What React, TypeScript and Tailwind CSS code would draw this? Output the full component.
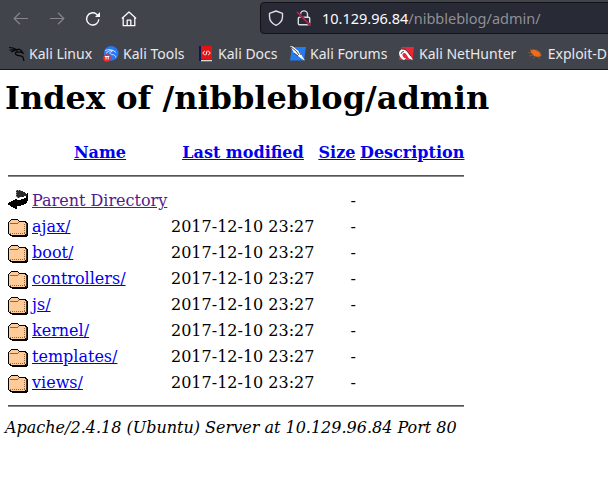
import React from "react";

const folders = ["ajax/", "boot/", "controllers/", "js/", "kernel/", "templates/", "views/"];

function FolderIcon() {
  return (
    <svg width="20" height="22" viewBox="0 0 20 22" shapeRendering="crispEdges">
      <path d="M2 5h1V4h7v1h1v1h7v1h1v1h1v13h-1v1H4v-1H2v-1H1v-1H0V7h1V6h1z" fill="#000" />
      <path d="M1 7h1V6h1V5h7v1h1v1h6v1h1v11h-1v1H3v-1H1z" fill="#ffcc99" />
      <path d="M2 8.5h8M10 7.5h1" stroke="#996633" />
      <path d="M2 18.5h15M16.5 9v10" stroke="#996633" strokeDasharray="1 1" />
      <path d="M18 8h1v12h-1z" fill="#333" />
    </svg>
  );
}

function BackIcon() {
  return (
    <svg width="20" height="22" viewBox="0 0 20 22" shapeRendering="crispEdges">
      <path d="M8 1h4v1h3v1h2v1h1v1h1v2h-3v1h-4v1H9V8H8z" fill="#2b2b2b" />
      <path d="M8 1.5h5M8.5 1v7M9 8.5h3" stroke="#999" strokeDasharray="1 1" />
      <path d="M19 4h1v8h-1v2h-1v1h-2v1h-3v1H9v3H7v-1H5v-1H3v-1H2v-1H0v-2h1v-1h2v-1h2v-1h2v-1h2v1h4v-1h3V9h2V7h1z" fill="#000" />
    </svg>
  );
}

function Dragon() {
  return (
    <svg width="16" height="16" viewBox="0 0 16 16" fill="none" stroke="#050607">
      <path d="M0 1.5l4 .5 4 1.7M.5 4l4-.3 4 .5M2 6l4-1.5" strokeWidth="1.1" />
      <path d="M7 4l3-.8 2.3 1.2L14 7l-2.5-.8L8 6c-1.8.2-2.2 2-.6 2.9 2 1 4.8.3 6.3 2 .8 1 .8 2.5 1.3 4.1" strokeWidth="1.3" />
    </svg>
  );
}

function ToolsIcon() {
  return (
    <svg width="16" height="16" viewBox="0 0 16 16">
      <circle cx="8.2" cy="7.4" r="7.3" fill="#2878f5" />
      <path d="M2 4.5l4-1 4 .8 3 2.2M3 7l4-2.5 3 .3M9 5.5c-3 .3-2.5 2.500 0 3 2.500.3 3.400 1 4 3" fill="none" stroke="#d9eaff" strokeWidth=".9" />
      <circle cx="4" cy="12" r="3.8" fill="#ef2929" />
      <path d="M1.800 10.500h4.500M3 10.500v3M5.200 10.500v3" stroke="#fff" strokeWidth="1" />
    </svg>
  );
}

function DocsIcon() {
  return (
    <svg width="16" height="16" viewBox="0 0 16 16">
      <path d="M1 0H4v15H1z" fill="#061b54" />
      <path d="M3 0h11v13.500H3z" fill="#df1515" />
      <path d="M3 14h11v1.300H3z" fill="#d8d8d8" />
      <path d="M6.800 5L4.700 7l2.100 2M10.200 5l2.100 2-2.100 2M9.200 4.800L7.800 9.200" fill="none" stroke="#fff" />
    </svg>
  );
}

function ForumsIcon() {
  return (
    <svg width="16" height="16" viewBox="0 0 16 16">
      <path d="M2 1H16l-2 13.500H0z" fill="#237cf1" />
      <path d="M0 0l3 .5 4 3.500 3 2 2 4 3 4.500-3-1.500-4-3-4-3-2-4z" fill="#fff" />
      <path d="M1 1l5 4 3 4M9 5l2 4M4 7l4 3" fill="none" stroke="#25272c" strokeWidth=".8" />
    </svg>
  );
}

function HunterIcon() {
  return (
    <svg width="16" height="16" viewBox="0 0 16 16">
      <path d="M2.500 1H15l-1.500 13H0z" fill="#ec2638" />
      <path d="M0 7c.5-3 3-4.500 5.500-3.500C8 4.500 9 6.500 11 9l3 5-4-1.500-3-4.500C6 6.500 4 7 3.500 8.500 3 10 5 12 7 12.500L5 14C2 13 0 10 0 7z" fill="#fff" />
      <path d="M3 3l3 .3 3 3 3 4M2 8l1-2 2-.5" fill="none" stroke="#222" strokeWidth=".8" />
    </svg>
  );
}

function ExploitIcon() {
  return (
    <svg width="16" height="16" viewBox="0 0 16 16">
      <path d="M2.500 4l3-.5 4 1 3 2.500.8 3-3 1-4-1-3-3z" fill="#f36b16" />
      <path d="M0 6.500l4 .5M1 10l5-1M5 12.500l3-2.500M8 3l1 3M11 6h2M11 9h3M10 10l2 3M2 3l3 2" stroke="#a85b35" strokeWidth=".7" />
    </svg>
  );
}

const bookmarks = [
  { label: "Kali Linux", Icon: Dragon, width: "w-[94px]" },
  { label: "Kali Tools", Icon: ToolsIcon, width: "w-[95px]" },
  { label: "Kali Docs", Icon: DocsIcon, width: "w-[92px]" },
  { label: "Kali Forums", Icon: ForumsIcon, width: "w-[109px]" },
  { label: "Kali NetHunter", Icon: HunterIcon, width: "w-[129px]" },
  { label: "Exploit-D", Icon: ExploitIcon, width: "w-[79px]" },
];

function BrowserBar() {
  return (
    <header className="h-[70px] overflow-hidden border-b border-[#15161b] bg-[#42444c] font-['Noto_Sans',sans-serif] text-[#e8e8ec]">
      <div className="flex h-[38px]">
        <div className="flex w-[260px] shrink-0 items-start gap-5 pt-[11px] pl-[13px]">
          <svg width="16" height="16" viewBox="0 0 16 16" fill="none" stroke="#85868b" strokeWidth="1.2"><path d="M15 7.5H1M7 1.800L1.200 7.500 7 13.200" /></svg>
          <svg width="16" height="16" viewBox="0 0 16 16" fill="none" stroke="#85868b" strokeWidth="1.2"><path d="M1 7.5h14M9 1.800l5.800 5.700L9 13.200" /></svg>
          <svg width="16" height="16" viewBox="0 0 16 16" fill="none" stroke="#fbfbfe" strokeWidth="1.4"><path d="M13.8 8.3A6.100 6.100 0 1 1 11.300 3L13 4.700" /><path d="M15 1v5h-5z" fill="#fbfbfe" stroke="none" /></svg>
          <svg width="16" height="16" viewBox="0 0 16 16" fill="none" stroke="#fbfbfe" strokeWidth="1.3" strokeLinejoin="round"><path d="M.9 7.5L8 1l7.100 6.500M2.200 6.500v8.200h11.600V6.500M6.200 14.500V9.200h3.600v5.300" /></svg>
        </div>
        <div className="mt-[2px] flex h-8 w-[360px] shrink-0 items-center rounded-[4px] border border-[#121319] bg-[#282a35]">
          <svg className="ml-[7px]" width="16" height="16" viewBox="0 0 16 16" fill="none" stroke="#dcdce2" strokeWidth="1.4" strokeLinejoin="round"><path d="M8 1L1.500 3.400v3.100C1.500 10.200 4 13.600 8 15.300c4-1.700 6.500-5.100 6.500-8.800V3.400z" /></svg>
          <svg className="ml-3" width="16" height="16" viewBox="0 0 16 16" fill="none" stroke="#dcdce2" strokeWidth="1.4"><path d="M4.500 7V4.400a3.500 3.500 0 0 1 7 0V7" /><rect x="2.3" y="7.3" width="11.4" height="7.5" rx="1.2" /><path d="M1 2l13 13" stroke="#282a35" strokeWidth="2.5" /><path d="M1 2l13.500 13.500" stroke="#d91e52" strokeWidth="1.4" /></svg>
          <div className="ml-[10px] text-[14.5px] leading-5 whitespace-pre text-[#fbfbfe]">10.129.96.84<span className="text-[#8f9097]">/nibbleblog/admin/</span></div>
        </div>
      </div>
      <nav className="flex h-8 items-center pl-[9px]">
        {bookmarks.map(({ label, Icon, width }) => (
          <div key={label} className={`flex shrink-0 items-center gap-1 ${width}`}>
            <Icon />
            <span className="text-[14px] leading-5 whitespace-nowrap">{label}</span>
          </div>
        ))}
      </nav>
    </header>
  );
}

const rowGrid = "grid grid-cols-[135px_143px_38px_104px] gap-x-1";

export default function App() {
  return (
    <div className="h-[480px] w-[608px] overflow-hidden bg-white">
      <BrowserBar />
      <main className="font-['DejaVu_Serif',serif] text-base text-black">
        <h1 className="pt-[9px] pl-[5px] text-[32px] leading-[38px] font-bold whitespace-nowrap">Index of /nibbleblog/admin</h1>
        <section className="mt-[26px] ml-2 w-[456px]">
          <div className="ml-6 grid h-8 grid-cols-[136px_142px_38px_103px] gap-x-1 text-center leading-5 font-bold whitespace-nowrap text-[#0000ee] underline">
            <a>Name</a><a>Last modified</a><a>Size</a><a>Description</a>
          </div>
          <div className="h-[2px] border-t border-t-[#555] bg-[#888]" />
          <div className="pt-3">
            <div className="flex h-[26px] items-start">
              <BackIcon />
              <div className={`${rowGrid} ml-1 leading-[23px]`}>
                <a className="whitespace-nowrap text-[#551a8b] underline">Parent Directory</a>
                <span />
                <span className="text-right">-</span>
              </div>
            </div>
            {folders.map((name) => (
              <div key={name} className="flex h-[26px] items-start">
                <FolderIcon />
                <div className={`${rowGrid} ml-1 leading-[23px]`}>
                  <a className="text-[#0000ee] underline">{name}</a>
                  <span className="text-right whitespace-nowrap">2017-12-10 23:27</span>
                  <span className="text-right">-</span>
                </div>
              </div>
            ))}
          </div>
          <div className="mt-2 h-[2px] border-t border-t-[#555] bg-[#888]" />
        </section>
        <address className="mt-[11px] ml-[5px] leading-5 italic">Apache/2.4.18 (Ubuntu) Server at 10.129.96.84 Port 80</address>
      </main>
    </div>
  );
}
